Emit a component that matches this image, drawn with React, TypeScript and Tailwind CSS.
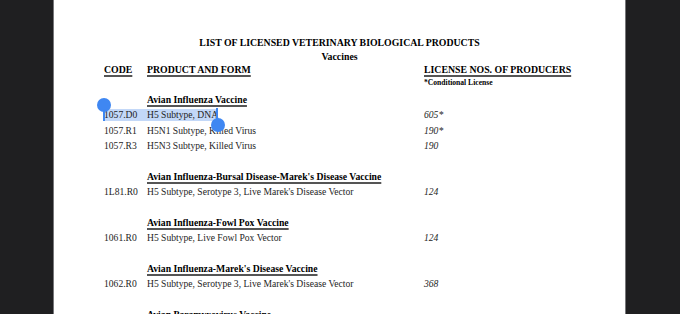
import React from "react";

const serif = { fontFamily: '"Liberation Serif", "Times New Roman", serif' };

function Row({ code, product, lic }: { code: string; product: string; lic: string }) {
  return (
    <div className="flex h-[15.5px] items-center leading-[15.5px] text-[9.6px] text-[#1e1e1e]">
      <div className="w-[43px] shrink-0">{code}</div>
      <div className="w-[277px] shrink-0">{product}</div>
      <div className="italic">{lic}</div>
    </div>
  );
}

function Heading({ children, mt = true }: { children: React.ReactNode; mt?: boolean }) {
  return (
    <div className={`flex h-[15.5px] items-center leading-[15.5px] ${mt ? "mt-[15px]" : ""}`}>
      <div className="w-[43px] shrink-0" />
      <div className="text-[9.7px] font-bold text-black underline decoration-[#555] decoration-[1.5px] underline-offset-[2px]">
        {children}
      </div>
    </div>
  );
}

export default function App() {
  return (
    <div className="flex h-[314px] w-[680px] overflow-hidden bg-[#1f1f21]" style={serif}>
      <div className="w-[53px] shrink-0 bg-[#1f1f21]" />
      <div className="w-px shrink-0 bg-[#77777a]" />
      <div className="relative flex-1 bg-white pl-[50px] pt-[36px]">
        <div className="-ml-[50px] text-center text-[9.8px] font-bold leading-[13px] text-black">
          LIST OF LICENSED VETERINARY BIOLOGICAL PRODUCTS
        </div>
        <div className="-ml-[50px] mt-[1px] text-center text-[9.8px] font-bold leading-[13px] text-black">Vaccines</div>
        <div className="flex h-[13px] items-center text-[9.8px] font-bold leading-[13px] text-black">
          <div className="w-[43px] shrink-0">
            <span className="underline decoration-[#555] decoration-[1.5px] underline-offset-[2px]">CODE</span>
          </div>
          <div className="w-[277px] shrink-0">
            <span className="underline decoration-[#555] decoration-[1.5px] underline-offset-[2px]">PRODUCT AND FORM</span>
          </div>
          <div>
            <span className="underline decoration-[#555] decoration-[1.5px] underline-offset-[2px]">LICENSE NOS. OF PRODUCERS</span>
          </div>
        </div>
        <div className="mt-[1.5px] flex h-[10.5px] items-center text-[7.6px] font-bold leading-[10px] text-black">
          <div className="w-[320px] shrink-0" />
          <div>*Conditional License</div>
        </div>
        <div className="mt-[3.5px]" />
        <Heading mt={false}>Avian Influenza Vaccine</Heading>
        <div className="relative">
          <div className="absolute left-[-1px] top-[1.5px] h-[12.5px] w-[115px] bg-[#c3d8f8]" />
          <div className="relative">
            <Row code="1057.D0" product="H5 Subtype, DNA" lic="605*" />
          </div>
          <div className="absolute left-[-1px] top-[0px] h-[14px] w-[2px] bg-[#3f87f2]" />
          <div className="absolute left-[-7px] top-[-9px] h-[14px] w-[14px] rounded-full bg-[#3f87f2]" />
          <div className="absolute left-[112px] top-[1px] h-[13px] w-[2px] bg-[#3f87f2]" />
          <div className="absolute left-[107px] top-[10.5px] h-[14px] w-[14px] rounded-full bg-[#3f87f2]" />
        </div>
        <Row code="1057.R1" product="H5N1 Subtype, Killed Virus" lic="190*" />
        <Row code="1057.R3" product="H5N3 Subtype, Killed Virus" lic="190" />
        <Heading>Avian Influenza-Bursal Disease-Marek's Disease Vaccine</Heading>
        <Row code="1L81.R0" product="H5 Subtype, Serotype 3, Live Marek's Disease Vector" lic="124" />
        <Heading>Avian Influenza-Fowl Pox Vaccine</Heading>
        <Row code="1061.R0" product="H5 Subtype, Live Fowl Pox Vector" lic="124" />
        <Heading>Avian Influenza-Marek's Disease Vaccine</Heading>
        <Row code="1062.R0" product="H5 Subtype, Serotype 3, Live Marek's Disease Vector" lic="368" />
        <Heading>Avian Paramyxovirus Vaccine</Heading>
      </div>
      <div className="w-px shrink-0 bg-[#77777a]" />
      <div className="w-[54px] shrink-0 bg-[#1f1f21]" />
    </div>
  );
}
